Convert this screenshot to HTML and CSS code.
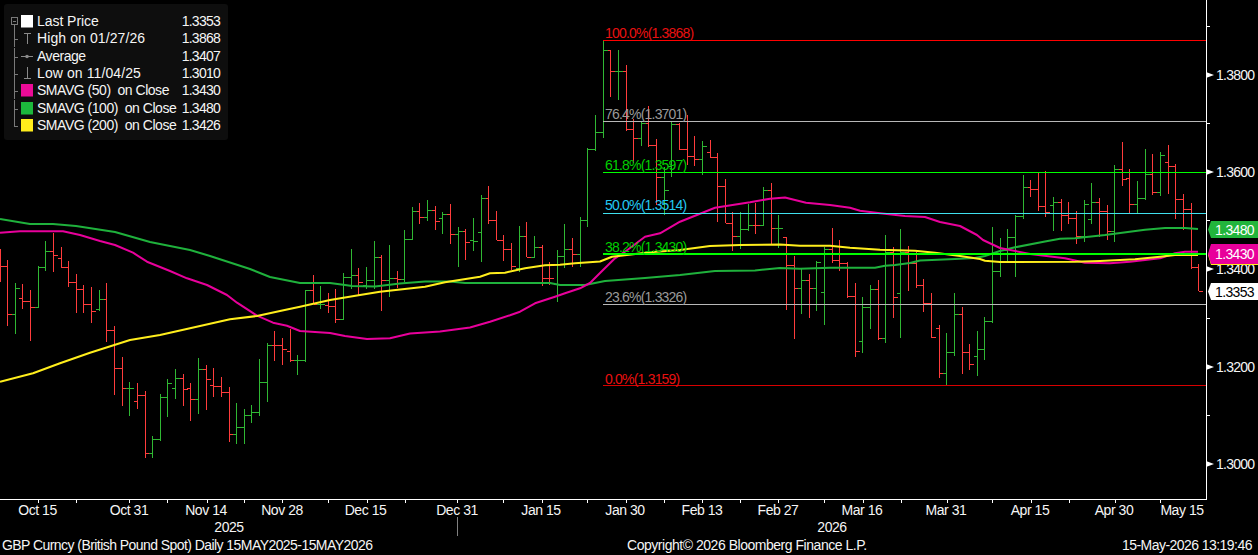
FILE: index.html
```html
<!DOCTYPE html>
<html lang="en">
<head>
<meta charset="utf-8">
<title>GBP Curncy</title>
<link rel="stylesheet" href="styles.css">
</head>
<body>
<main class="terminal">
  <section class="plot">
    <svg class="chart" width="1258" height="536" viewBox="0 0 1258 536">
      <path id="bars-down" class="bar bar-down" d=""/>
      <path id="bars-up" class="bar bar-up" d=""/>

      <polyline class="ma ma-100" points="0,219 30,224 53,224 76,226 115,232 150,242 190,250 210,256 250,269 270,277 300,283 330,283 345,285 352,286 375,286.5 400,283.5 425,281.5 450,281.5 465,283 550,283 560,285 585,285 605,281 645,278 680,275 715,271 755,270.5 780,268 800,268.7 830,267.7 875,267.7 885,265.7 895,265 910,263 920,260.5 955,259 975,258 985,256 1000,251 1015,247.3 1045,241.5 1060,238.7 1075,238.3 1105,235 1145,229.7 1165,228 1185,228 1198,229"/>
      <polyline class="ma ma-50" points="0,232.7 20,231.3 63,231.3 80,235 100,241 115,245 133,252.7 147,261.7 170,271 187,278.3 207,285 227,295 237,302.7 257,315.7 273,322.7 287,325.7 300,331 330,333 345,336 367,339 390,338.3 410,333.5 440,331.5 470,327.5 490,321.7 510,315.3 520,311.7 535,303.3 555,296.7 565,293.3 580,288.3 590,283 600,273 615,258.3 625,251.7 645,236.7 660,233.3 680,221.7 705,211.7 715,207.7 750,202.3 770,198.7 785,197.5 806,202.7 830,205 850,207.7 860,210.7 880,213.3 905,216 925,217 940,222 960,226 977,235 983,240 1000,248 1030,254 1065,258.3 1085,262.7 1110,263.3 1130,261.7 1160,258.3 1175,253.3 1185,251.7 1198,251.7"/>
      <polyline class="ma ma-200" points="0,381.7 33,373.3 60,363.3 90,352.7 130,340 160,335 200,326 230,319.3 257,316 280,311 300,306.7 330,300 360,295 380,291.7 425,286.7 445,282.3 480,276.7 490,273.3 505,272.7 525,268.3 545,265.3 560,264.7 575,263.3 600,261.5 612,256.7 650,252.3 680,250 710,246 740,245 780,244.5 800,245.7 830,245.7 850,247.7 880,249.7 915,250.7 935,252.7 960,256 980,259 985,260.7 1000,262 1075,261.7 1100,261 1135,259.3 1160,256.7 1175,255 1198,255"/>

      <path class="fib fib-red" d="M603 40.5H1206"/>
      <path class="fib fib-grey" d="M603 121.5H1206M603 304.5H1206"/>
      <path class="fib fib-green" d="M603 172.5H1206"/>
      <path class="fib fib-cyan" d="M603 213.5H1206"/>
      <path class="fib fib-bold" d="M603 254H1206"/>
      <path class="fib fib-darkred" d="M603 385.5H1206"/>

      <text class="label t-red" x="605" y="38">100.0%(1.3868)</text>
      <text class="label t-grey" x="605" y="119">76.4%(1.3701)</text>
      <text class="label t-green" x="605" y="170">61.8%(1.3597)</text>
      <text class="label t-cyan" x="605" y="210">50.0%(1.3514)</text>
      <text class="label t-green" x="605" y="252">38.2%(1.3430)</text>
      <text class="label t-grey" x="605" y="302">23.6%(1.3326)</text>
      <text class="label t-red" x="605" y="384">0.0%(1.3159)</text>

      <path class="axis" d="M1206.5 0V499.5H0"/>
      <path class="axis" d="M38.5 500V503M76.5 500V503M129.5 500V503M167.5 500V503M207.5 500V503M244.5 500V503M282.5 500V503M328.5 500V503M367.5 500V503M405.5 500V503M457.5 500V503M503.5 500V503M542.5 500V503M587.5 500V503M626.5 500V503M664.5 500V503M702.5 500V503M740.5 500V503M778.5 500V503M824.5 500V503M863.5 500V503M901.5 500V503M947.5 500V503M992.5 500V503M1031.5 500V503M1069.5 500V503M1115.5 500V503M1160.5 500V503M1207 26.5H1210M1207 123.5H1210M1207 220.5H1210M1207 318.5H1210M1207 415.5H1210"/>
      <path class="axis-rule" d="M457.5 517V536"/>

      <g class="axis-labels">
        <text x="37.500" y="515">Oct 15</text>
        <text x="129" y="515">Oct 31</text>
        <text x="206" y="515">Nov 14</text>
        <text x="282" y="515">Nov 28</text>
        <text x="365.500" y="515">Dec 15</text>
        <text x="457" y="515">Dec 31</text>
        <text x="541" y="515">Jan 15</text>
        <text x="625" y="515">Jan 30</text>
        <text x="702" y="515">Feb 13</text>
        <text x="778" y="515">Feb 27</text>
        <text x="862" y="515">Mar 16</text>
        <text x="946" y="515">Mar 31</text>
        <text x="1030" y="515">Apr 15</text>
        <text x="1114" y="515">Apr 30</text>
        <text x="1182" y="515">May 15</text>
        <text x="229" y="532">2025</text>
        <text x="832" y="532">2026</text>
      </g>

      <g class="price-ticks">
        <path d="M1206 72 1214 75 1206 78ZM1206 169 1214 172 1206 175ZM1206 266 1214 269 1206 272ZM1206 364 1214 367 1206 370ZM1206 461 1214 464 1206 467Z"/>
      </g>
      <g class="price-labels">
        <text x="1216" y="80">1.3800</text>
        <text x="1216" y="177">1.3600</text>
        <text x="1216" y="274">1.3400</text>
        <text x="1216" y="372">1.3200</text>
        <text x="1216" y="469">1.3000</text>
      </g>

      <polygon class="tag tag-yellow" points="1208,255 1211,246 1258,246 1258,265 1211,265"/>
      <polygon class="tag tag-green" points="1208,229.5 1211,221 1258,221 1258,238 1211,238"/>
      <polygon class="tag tag-pink" points="1208,254 1211,244 1258,244 1258,264 1211,264"/>
      <polygon class="tag tag-white" points="1208,291.5 1211,283 1258,283 1258,300 1211,300"/>
      <text class="tag-text" x="1215" y="234.5">1.3480</text>
      <text class="tag-text" x="1215" y="259">1.3430</text>
      <text class="tag-text tag-text-dark" x="1215" y="296.5">1.3353</text>
    </svg>

    <aside class="legend">
      <div class="row">
        <svg class="tree" width="33" height="17" viewBox="0 0 33 17"><path class="tree-box" d="M7.5 4.5H13.5V11.5H7.5ZM9 8H12"/><path class="tree-line" d="M10.5 11.5V17"/><rect class="swatch-white" x="17" y="2" width="12" height="12.500"/></svg>
        <span class="name">Last Price</span><span class="value">1.3353</span>
      </div>
      <div class="row">
        <svg class="tree" width="33" height="17" viewBox="0 0 33 17"><path class="tree-line" d="M10.500 0V17M10.500 9H14"/><path class="glyph" d="M20 3.500H27M23.500 3.500V14"/></svg>
        <span class="name name-date">High on 01/27/26</span><span class="value">1.3868</span>
      </div>
      <div class="row">
        <svg class="tree" width="33" height="17" viewBox="0 0 33 17"><path class="tree-line" d="M10.500 0V17M10.500 9H14"/><path class="glyph" d="M17 8.500H29"/><circle class="glyph-dot" cx="23" cy="8.500" r="1.800"/></svg>
        <span class="name name-tight">Average</span><span class="value">1.3407</span>
      </div>
      <div class="row">
        <svg class="tree" width="33" height="17" viewBox="0 0 33 17"><path class="tree-line" d="M10.500 0V17M10.500 9H14"/><path class="glyph" d="M20 13.500H27M23.500 2V13.500"/></svg>
        <span class="name name-date">Low on 11/04/25</span><span class="value">1.3010</span>
      </div>
      <div class="row">
        <svg class="tree" width="33" height="17" viewBox="0 0 33 17"><path class="tree-line" d="M10.500 0V17M10.500 9H14"/><rect class="swatch-pink" x="17" y="2" width="12" height="12.500"/></svg>
        <span class="name name-tight">SMAVG (50)  on Close</span><span class="value">1.3430</span>
      </div>
      <div class="row">
        <svg class="tree" width="33" height="17" viewBox="0 0 33 17"><path class="tree-line" d="M10.500 0V17M10.500 9H14"/><rect class="swatch-green" x="17" y="2" width="12" height="12.500"/></svg>
        <span class="name name-tight">SMAVG (100)  on Close</span><span class="value">1.3480</span>
      </div>
      <div class="row">
        <svg class="tree" width="33" height="17" viewBox="0 0 33 17"><path class="tree-line" d="M10.500 0V9H14"/><rect class="swatch-yellow" x="17" y="2" width="12" height="12.500"/></svg>
        <span class="name name-tight">SMAVG (200)  on Close</span><span class="value">1.3426</span>
      </div>
    </aside>
  </section>

  <footer class="footer">
    <span class="foot-title">GBP Curncy (British Pound Spot) Daily 15MAY2025-15MAY2026</span>
    <span class="foot-copy">Copyright© 2026 Bloomberg Finance L.P.</span>
    <span class="foot-time">15-May-2026 13:19:46</span>
  </footer>
</main>
<script src="chart.js"></script>
</body>
</html>
```
FILE: styles.css
```css
* { box-sizing: border-box; }
html, body { margin: 0; padding: 0; background: #000; }
body { width: 1258px; height: 555px; overflow: hidden; font-family: "Liberation Sans", Arial, sans-serif; color: #f5f5f5; }
.terminal { display: flex; flex-direction: column; width: 1258px; height: 555px; }
.plot { position: relative; height: 536px; flex: none; }
.chart { display: block; }

.bar { fill: none; stroke-width: 1; shape-rendering: crispEdges; }
.bar-down { stroke: #ff3c3c; }
.bar-up { stroke: #2fb733; }

.ma { fill: none; stroke-width: 2; stroke-linejoin: round; }
.ma-100 { stroke: #1fb13c; }
.ma-50 { stroke: #e8009b; }
.ma-200 { stroke: #ffee1c; }

.fib { fill: none; stroke-width: 1; shape-rendering: crispEdges; }
.fib-red { stroke: #ff0000; }
.fib-darkred { stroke: #d80000; }
.fib-grey { stroke: #b8b8b8; }
.fib-green { stroke: #00ff00; }
.fib-cyan { stroke: #3fe0ee; }
.fib-bold { stroke: #00ff00; stroke-width: 2; }

.label { font-size: 14px; letter-spacing: -.8px; }
.t-red { fill: #e81010; }
.t-grey { fill: #9a9a9a; }
.t-green { fill: #00cf00; }
.t-cyan { fill: #22c8f2; }

.axis { fill: none; stroke: #fff; stroke-width: 1; shape-rendering: crispEdges; }
.axis-rule { fill: none; stroke: #808080; stroke-width: 1; shape-rendering: crispEdges; }
.axis-labels text { fill: #f5f5f5; font-size: 14px; letter-spacing: -.45px; text-anchor: middle; }

.price-ticks path { fill: #fff; }
.price-labels text { fill: #f5f5f5; font-size: 14px; letter-spacing: -.75px; }

.tag-yellow { fill: #ffee1c; }
.tag-green { fill: #22b53c; }
.tag-pink { fill: #e8009b; }
.tag-white { fill: #fff; }
.tag-text { fill: #fff; font-size: 14px; letter-spacing: -.65px; }
.tag-text-dark { fill: #000; }

.legend { position: absolute; left: 4px; top: 4px; width: 224px; height: 136px; padding: 9px 8px 0 0; background: #0e0e0e; border-radius: 3px; display: grid; grid-auto-rows: 17.33px; }
.row { display: flex; align-items: center; white-space: pre; font-size: 14px; letter-spacing: -.05px; line-height: 17px; }
.tree { flex: none; }
.name { flex: 1; }
.name-date { letter-spacing: .1px; }
.name-tight { letter-spacing: -.47px; }
.value { letter-spacing: -.75px; }

.tree-box, .tree-line { fill: none; stroke: #7a7a7a; stroke-width: 1; shape-rendering: crispEdges; }
.glyph { fill: none; stroke: #8a8a8a; stroke-width: 1; shape-rendering: crispEdges; }
.glyph-dot { fill: #8a8a8a; }
.swatch-white { fill: #fff; }
.swatch-pink { fill: #ec0b97; }
.swatch-green { fill: #1cb93c; }
.swatch-yellow { fill: #ffed1c; }

.footer { display: grid; grid-template-columns: 625px 495px 1fr; height: 19px; padding-left: 2px; font-size: 14px; line-height: 19px; white-space: nowrap; }
.foot-title { letter-spacing: -.56px; }
.foot-copy { letter-spacing: -.47px; }
.foot-time { letter-spacing: -.55px; }
```
FILE: chart.js
```js
// Daily OHLC bars: [direction, high, low, open tick, close tick] in chart pixels.
var R = 'r', G = 'g';
var bars = [
[R,249,282,258,266],[R,260,326,266,314],[G,283,334,314,288],[R,284,309,298,301],[R,290,341,301,307],
[G,266,308,307,267],[G,241,271,267,251],[R,233,272,251,255],[R,247,268,258,267],[R,261,287,267,282],
[R,274,313,282,289],[R,285,313,289,304],[R,287,323,304,311],[G,290,311,309,299],[R,283,342,299,330],
[R,326,395,330,368],[R,357,406,368,388],[G,382,416,388,388],[R,383,409,401,395],[R,391,458,395,453],
[G,436,458,453,439],[G,394,441,439,397],[G,379,417,397,383],[G,369,399,388,378],[R,374,406,378,389],
[R,383,421,388,399],[G,358,414,399,369],[R,365,410,369,379],[R,368,397,385,386],[R,377,397,386,392],
[R,387,442,392,434],[G,403,444,434,427],[G,409,444,427,415],[G,405,423,415,412],[G,359,416,412,382],
[G,343,402,382,345],[R,331,361,345,345],[R,338,365,345,349],[R,329,362,351,360],[G,355,375,360,360],
[G,290,362,360,290],[R,275,304,290,304],[G,286,309,304,304],[R,293,313,305,306],[R,289,323,306,319],
[G,273,319,319,277],[G,249,289,277,275],[R,268,295,275,282],[G,267,289,285,280],[G,241,289,280,257],
[R,255,311,257,280],[G,245,297,280,278],[R,271,288,278,279],[G,230,282,279,239],[G,207,239,239,211],
[R,203,224,211,217],[G,200,221,217,210],[R,206,230,210,221],[G,212,234,218,214],[R,204,244,214,234],
[G,227,267,234,231],[R,229,260,231,242],[G,218,251,240,241],[G,195,262,232,198],[R,186,224,198,220],
[R,211,240,220,240],[R,235,261,240,249],[R,243,270,249,266],[G,226,272,268,236],[R,222,257,236,257],
[G,236,258,257,247],[R,245,286,247,278],[R,262,285,278,278],[G,250,302,284,256],[G,224,268,256,249],
[R,238,267,249,254],[G,217,267,254,220],[G,148,227,220,149],[G,115,151,149,132],[G,40,138,132,50],
[R,50,97,50,71],[G,50,100,71,71],[R,65,131,71,129],[R,119,163,129,138],[G,122,146,138,123],
[R,106,147,123,145],[R,139,205,145,177],[G,167,215,177,190],[G,122,177,166,124],[R,123,150,124,149],
[R,115,165,149,156],[R,136,166,156,159],[G,141,175,159,146],[R,140,158,152,157],[R,153,222,157,186],
[R,179,223,186,223],[R,212,251,223,236],[G,212,249,236,229],[G,204,231,229,225],[R,203,234,225,225],
[G,187,225,225,190],[R,183,245,190,228],[G,215,248,228,228],[R,237,310,237,265],[R,256,339,265,288],
[G,268,314,288,280],[R,274,318,280,288],[G,261,311,288,262],[G,247,325,292,249],[R,228,263,249,260],
[R,240,271,260,263],[R,262,298,263,296],[R,283,357,296,351],[G,297,353,341,307],[G,285,329,307,289],
[R,280,340,289,338],[G,235,343,338,252],[R,247,318,252,297],[G,229,338,293,252],[R,246,291,252,263],
[R,252,288,263,285],[R,279,312,285,303],[R,293,338,303,337],[R,325,378,328,373],[G,333,385,373,352],
[G,293,356,352,314],[R,307,374,314,352],[R,344,370,352,364],[G,331,376,356,349],[G,317,360,349,321],
[G,227,323,321,271],[G,238,277,271,253],[G,229,261,250,237],[G,215,277,237,216],[G,175,219,216,187],
[R,180,197,187,189],[R,173,211,189,206],[R,171,217,206,212],[G,197,231,205,202],[R,199,231,202,215],
[R,202,224,215,218],[R,211,244,218,236],[G,200,242,236,204],[G,183,224,219,202],[R,198,237,202,211],
[R,205,240,211,231],[G,165,242,231,169],[R,142,186,169,179],[R,169,213,178,204],[G,181,213,204,198],
[G,149,200,198,174],[R,154,195,174,192],[G,152,196,192,155],[R,145,194,162,166],[R,164,219,166,199],
[R,194,230,199,209],[R,203,269,209,267],[R,264,291,267,291]
];

var paths = { r: '', g: '' };
bars.forEach(function (b, i) {
  var x = Math.floor(i * 7.635) + 0.5;
  paths[b[0]] += 'M' + x + ' ' + b[1] + 'V' + b[2] +
    'M' + (x - 4) + ' ' + (b[3] + 0.5) + 'H' + x +
    'M' + x + ' ' + (b[4] + 0.5) + 'H' + (x + 4);
});
document.getElementById('bars-down').setAttribute('d', paths.r);
document.getElementById('bars-up').setAttribute('d', paths.g);
```
